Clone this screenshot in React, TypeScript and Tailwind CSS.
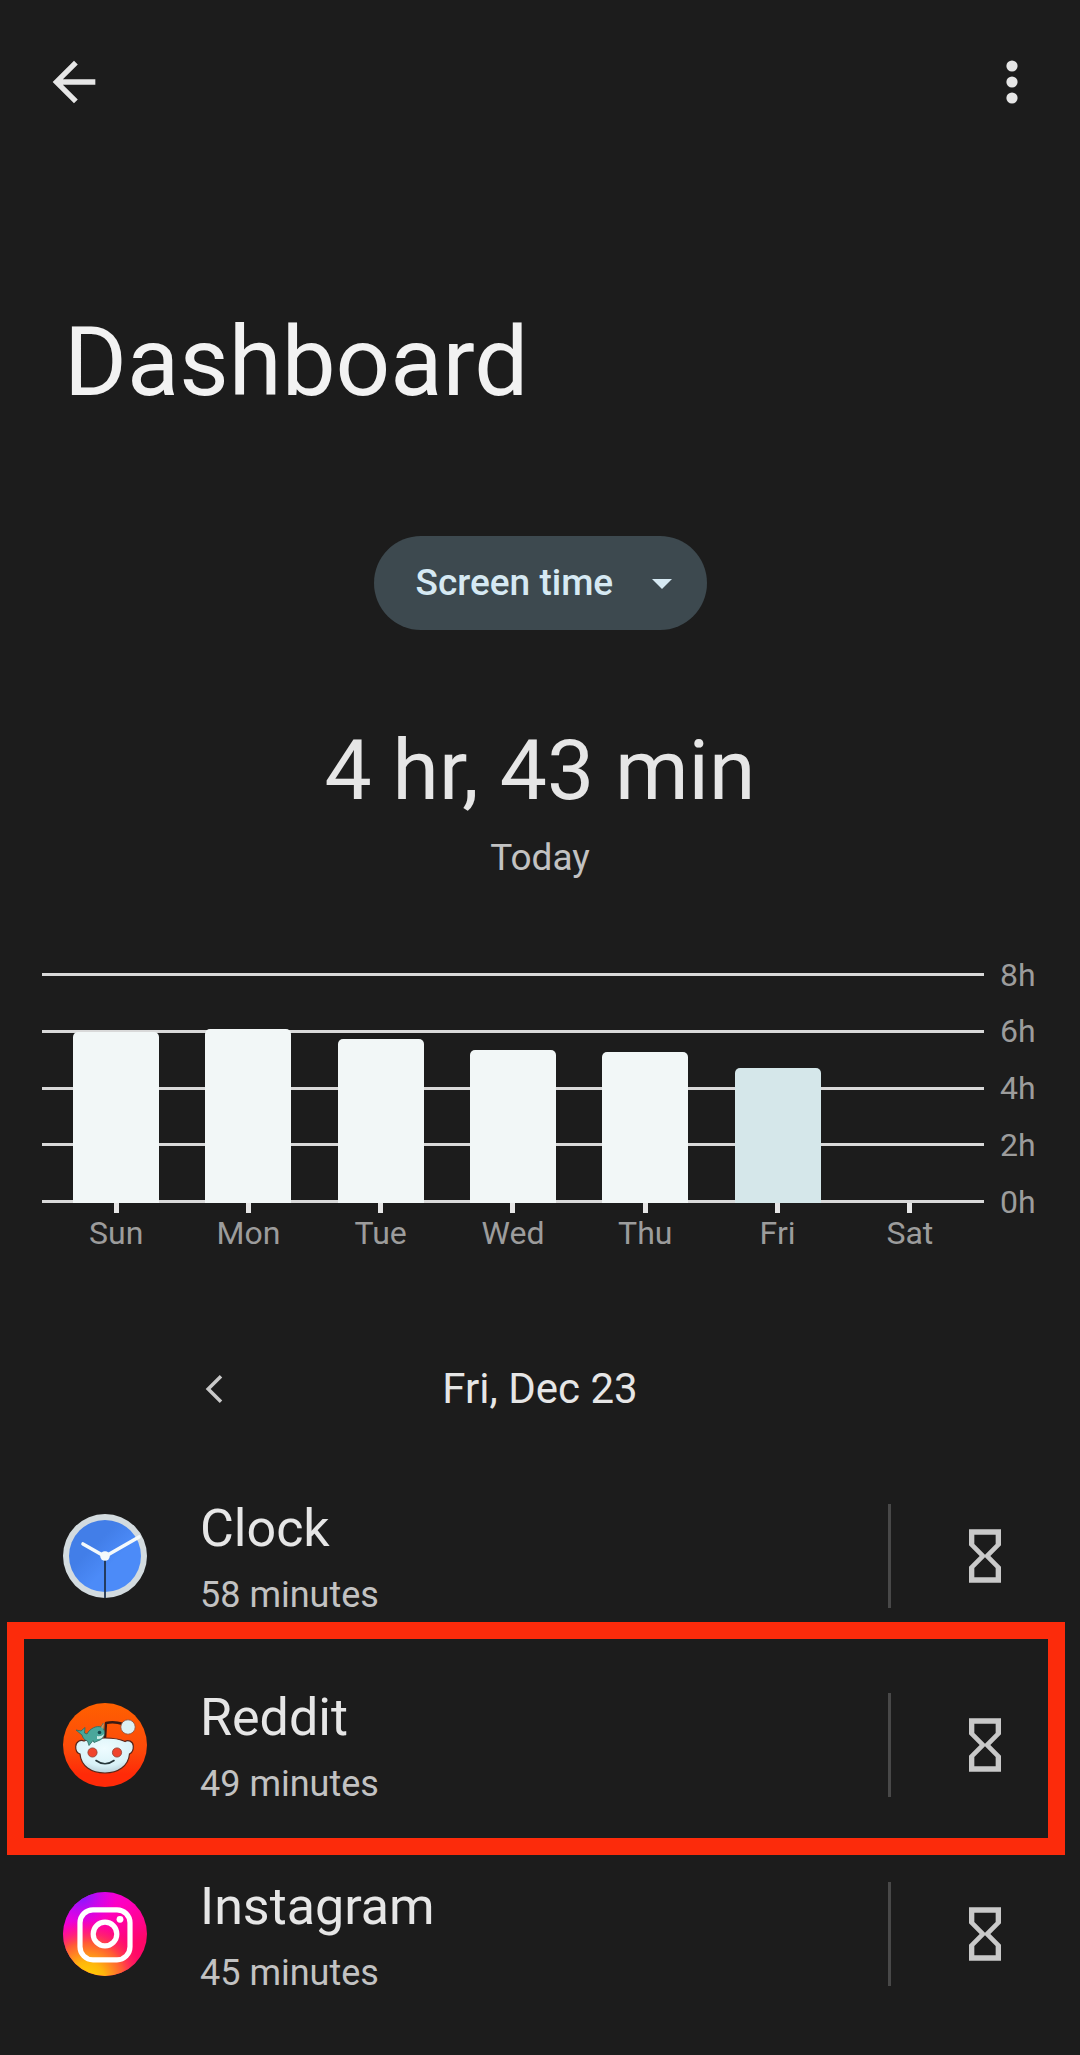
import type { ReactNode } from "react";

const days = [
  { label: "Sun", height: 171 },
  { label: "Mon", height: 174 },
  { label: "Tue", height: 164 },
  { label: "Wed", height: 153 },
  { label: "Thu", height: 151 },
  { label: "Fri", height: 135, today: true },
  { label: "Sat", height: 0 },
];

const hours = ["8h", "6h", "4h", "2h", "0h"];

function ClockIcon() {
  return (
    <svg viewBox="0 0 84 84" className="size-[84px] shrink-0" aria-hidden="true">
      <defs>
        <linearGradient id="clock-face" x1="0" y1="0" x2="1" y2="1">
          <stop offset="0.35" stopColor="#427ee8" />
          <stop offset="0.6" stopColor="#4c8bf8" />
        </linearGradient>
      </defs>
      <circle cx="42" cy="42" r="42" fill="#d3dbdf" />
      <circle cx="42" cy="42" r="36" fill="url(#clock-face)" />
      <path d="M42 44V84" stroke="#20334f" strokeWidth="1.8" />
      <path d="M20 30L42 42.5L76 23" fill="none" stroke="#f4f9fb" strokeWidth="3.6" strokeLinecap="round" />
      <circle cx="42" cy="42" r="4.8" fill="#f4f9fb" />
    </svg>
  );
}

function RedditIcon() {
  return (
    <svg viewBox="0 0 84 84" className="size-[84px] shrink-0" aria-hidden="true">
      <defs>
        <linearGradient id="reddit-bg" x1="0" y1="0" x2="0" y2="1">
          <stop offset="0" stopColor="#ff6000" />
          <stop offset="0.55" stopColor="#fc4a0a" />
          <stop offset="0.85" stopColor="#ff2a08" />
        </linearGradient>
        <radialGradient id="reddit-head" cx="0.5" cy="0.3" r="0.7">
          <stop offset="0" stopColor="#eefcff" />
          <stop offset="0.7" stopColor="#d9f2f8" />
          <stop offset="1" stopColor="#b9cfd8" />
        </radialGradient>
      </defs>
      <circle cx="42" cy="42" r="42" fill="url(#reddit-bg)" />
      <path d="M42 36L43 20Q51 18 60 21" fill="none" stroke="#3a1a14" strokeWidth="2.4" strokeLinejoin="round" />
      <circle cx="65" cy="24" r="7.2" fill="#dcf1f4" stroke="#8d5240" strokeWidth="0.8" />
      <path
        d="M21 38C26 35.5 34 35 42 35C50 35 57 36 62 38.5C65 36.5 70 38 70.3 43C70.5 47 68.5 50 66.5 51C65.5 63 55 70 42 70C28 70 18 63 17 51C14 50 12.5 47 12.7 43.5C13 38.5 17.500 36.5 21 38Z"
        fill="url(#reddit-head)"
        stroke="#5a2418"
        strokeWidth="1.2"
      />
      <circle cx="29.5" cy="49.5" r="4.6" fill="#f0442c" stroke="#8c3c30" strokeWidth="0.8" />
      <circle cx="54" cy="49.5" r="4.6" fill="#f0442c" stroke="#8c3c30" strokeWidth="0.8" />
      <path d="M33 57.5Q42 64 51 57.5" fill="none" stroke="#26363a" strokeWidth="1.6" strokeLinecap="round" />
      {/* narwhal riding on the head */}
      <path
        d="M13 27L18 28L22 24.5L21.5 30L24 31C27 25 34 22.5 38 24L40.5 20L40.5 26C43 30 41 35 37 37L31 39.5L30 37.5L26 42.5L24.5 38C21 37 20 35 19 32Z"
        fill="#4aa79b"
        stroke="#2a6a60"
        strokeWidth="0.8"
        strokeLinejoin="round"
      />
      <path d="M34 36Q40 36.5 41 31Q38 34 34 33Z" fill="#cdeee8" />
      <circle cx="36.5" cy="29.5" r="1.8" fill="#16484c" />
      <path d="M38 24L41 19.5L40.5 26Z" fill="#d98b54" />
    </svg>
  );
}

function InstagramIcon() {
  return (
    <svg viewBox="0 0 84 84" className="size-[84px] shrink-0" aria-hidden="true">
      <defs>
        <linearGradient id="ig-base" x1="0.2" y1="0" x2="0.8" y2="1">
          <stop offset="0" stopColor="#e800f0" />
          <stop offset="0.35" stopColor="#ff00bc" />
          <stop offset="0.75" stopColor="#ff0768" />
        </linearGradient>
        <radialGradient id="ig-purple" cx="0.22" cy="0.04" r="0.42">
          <stop offset="0" stopColor="#7a1cff" />
          <stop offset="1" stopColor="#c800ff" stopOpacity="0" />
        </radialGradient>
        <radialGradient id="ig-warm" cx="0.28" cy="1.05" r="0.72">
          <stop offset="0" stopColor="#ffd800" />
          <stop offset="0.3" stopColor="#ffb60c" />
          <stop offset="0.62" stopColor="#ff5a36" />
          <stop offset="1" stopColor="#ff0a70" stopOpacity="0" />
        </radialGradient>
      </defs>
      <circle cx="42" cy="42" r="42" fill="url(#ig-base)" />
      <circle cx="42" cy="42" r="42" fill="url(#ig-purple)" />
      <circle cx="42" cy="42" r="42" fill="url(#ig-warm)" />
      <rect x="17" y="17.8" width="50" height="50" rx="13" fill="none" stroke="#fff" strokeWidth="5.2" />
      <circle cx="42" cy="42" r="11.8" fill="none" stroke="#fff" strokeWidth="5.2" />
      <circle cx="57" cy="27.3" r="3.4" fill="#fff" />
    </svg>
  );
}

type AppRowProps = {
  name: string;
  time: string;
  icon: ReactNode;
  highlighted?: boolean;
};

function AppRow({ name, time, icon, highlighted }: AppRowProps) {
  return (
    <li className="relative flex h-[189px] items-center pl-[63px] pr-[62px]">
      {icon}
      <div className="ml-[53px] flex-1 pt-3">
        <h2 className="text-[52px] leading-[66px] text-[#e6e6e6]">{name}</h2>
        <p className="text-[36px] leading-[66px] text-[#c2c2c2]">{time}</p>
      </div>
      <div className="h-[104px] w-[3px] bg-[#484848]" />
      <button type="button" aria-label={`Set timer for ${name}`} className="ml-[62px] mr-px text-[#c9c9c9]">
        <svg viewBox="0 0 24 24" className="size-16" fill="currentColor" aria-hidden="true">
          <path d="M6 2v6h.01L6 8.01 10 12l-4 4 .01.01H6V22h12v-5.99h-.01L18 16l-4-4 4-3.99-.01-.01H18V2H6zm10 14.5V20H8v-3.5l4-4 4 4zm-4-5l-4-4V4h8v3.5l-4 4z" />
        </svg>
      </button>
      {highlighted && (
        <div className="pointer-events-none absolute -top-7 -bottom-4 left-[7px] right-[15px] border-[17px] border-[#fc2b0b]" />
      )}
    </li>
  );
}

function UsageChart() {
  return (
    <section aria-label="Daily screen time" className="mt-[91px] pl-[42px] pr-10">
      <div className="grid h-[230px]">
        <div className="col-start-1 row-start-1 flex flex-col justify-between">
          {hours.map((hour) => (
            <div key={hour} className="flex h-[3px] items-center gap-4">
              <div className="h-[3px] flex-1 bg-[#d9d9d9]" />
              <span className="w-10 text-[32px] leading-8 text-[#9c9c9c]">{hour}</span>
            </div>
          ))}
        </div>
        <div className="col-start-1 row-start-1 mr-14 grid grid-cols-7 items-end justify-items-center px-2">
          {days.map((day) => (
            <div
              key={day.label}
              className={`w-[86px] rounded-t-[5px] ${day.today ? "bg-[#d5e7ea]" : "bg-[#f2f7f7]"}`}
              style={{ height: day.height }}
            />
          ))}
        </div>
      </div>
      <div className="mr-14 grid grid-cols-7 px-2">
        {days.map((day) => (
          <div key={day.label} className="flex flex-col items-center gap-1">
            <div className="h-[10px] w-[5px] bg-[#e6e6e6]" />
            <span className="text-[32px] leading-8 text-[#9c9c9c]">{day.label}</span>
          </div>
        ))}
      </div>
    </section>
  );
}

export default function App() {
  return (
    <div className="min-h-screen bg-[#1c1c1c] font-['Roboto',sans-serif] text-[#e6e6e6]">
      <header className="flex h-[164px] items-center justify-between pl-[42px] pr-9">
        <button type="button" aria-label="Back">
          <svg viewBox="0 0 24 24" className="size-16" fill="currentColor" aria-hidden="true">
            <path d="M20 11H7.83l5.59-5.59L12 4l-8 8 8 8 1.41-1.41L7.83 13H20v-2z" />
          </svg>
        </button>
        <button type="button" aria-label="More options">
          <svg viewBox="0 0 24 24" className="size-16" fill="currentColor" aria-hidden="true">
            <circle cx="12" cy="6" r="2.1" />
            <circle cx="12" cy="12" r="2.1" />
            <circle cx="12" cy="18" r="2.1" />
          </svg>
        </button>
      </header>

      <main className="pb-6">
        <h1 className="mt-[138px] pl-16 text-[96px] leading-[120px] text-[#f2f2f2]">Dashboard</h1>

        <div className="mt-[114px] flex justify-center">
          <div className="relative">
            <select
              aria-label="Metric"
              className="h-[94px] w-[333px] appearance-none rounded-full bg-[#3d494f] pl-[42px] text-[37px] font-medium text-[#d6e9f3]"
            >
              <option>Screen time</option>
            </select>
            <svg
              viewBox="0 0 20 10"
              className="pointer-events-none absolute right-[35px] top-[43px] h-[10px] w-5 text-[#d6e9f3]"
              fill="currentColor"
              aria-hidden="true"
            >
              <path d="M0 0H20L10 10Z" />
            </svg>
          </div>
        </div>

        <div className="mt-[93px] text-center">
          <p className="text-[84px] leading-[96px]">4 hr, 43 min</p>
          <p className="mt-[15px] text-[37px] leading-[48px] text-[#c2c2c2]">Today</p>
        </div>

        <UsageChart />

        <div className="mt-[108px] grid h-16 grid-cols-[1fr_224px_1fr] items-center">
          <button type="button" aria-label="Previous day" className="justify-self-center text-[#c9c9c9]">
            <svg viewBox="0 0 24 24" className="size-14" fill="none" stroke="currentColor" strokeWidth="1.5" aria-hidden="true">
              <path d="M15 6.5L9.5 12L15 17.5" />
            </svg>
          </button>
          <p className="text-center text-[42px] leading-[48px]">Fri, Dec 23</p>
        </div>

        <ul className="mt-10">
          <AppRow name="Clock" time="58 minutes" icon={<ClockIcon />} />
          <AppRow name="Reddit" time="49 minutes" icon={<RedditIcon />} highlighted />
          <AppRow name="Instagram" time="45 minutes" icon={<InstagramIcon />} />
        </ul>
      </main>
    </div>
  );
}
